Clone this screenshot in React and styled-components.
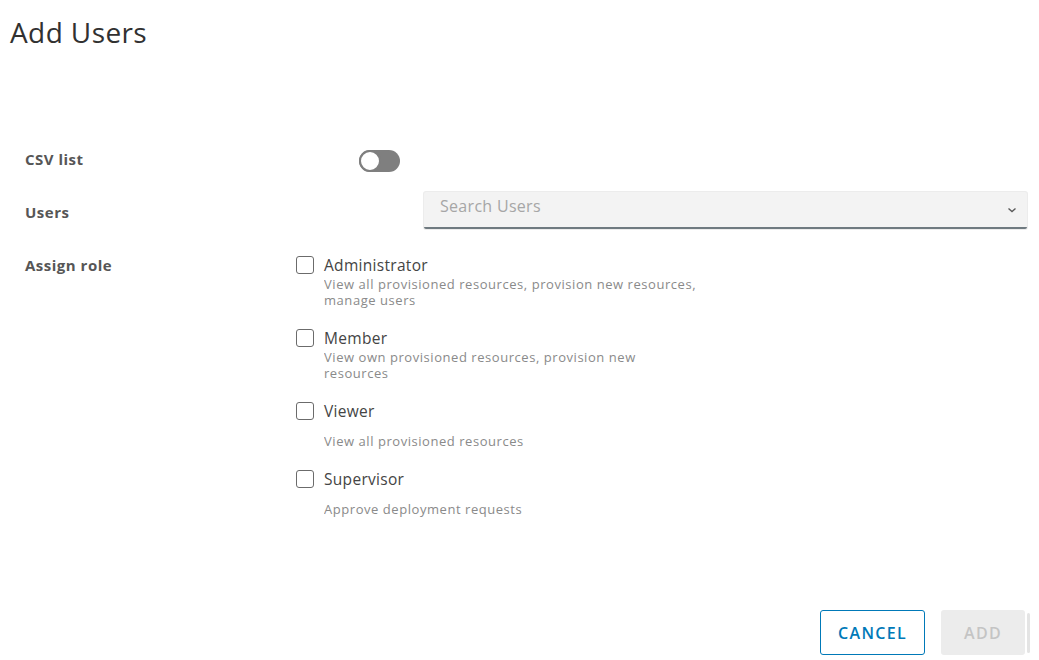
import React, { useState } from "react";
import styled, { createGlobalStyle } from "styled-components";

const GlobalStyle = createGlobalStyle`
  body {
    margin: 0;
    background: #fff;
    font-family: "Open Sans", "Liberation Sans", sans-serif;
  }
`;

const roles = [
  {
    name: "Administrator",
    desc: "View all provisioned resources, provision new resources, manage users",
  },
  { name: "Member", desc: "View own provisioned resources, provision new resources" },
  { name: "Viewer", desc: "View all provisioned resources", spaced: true },
  { name: "Supervisor", desc: "Approve deployment requests", spaced: true },
];

const App = () => {
  const [csv, setCsv] = useState(false);
  const [checked, setChecked] = useState({});

  return (
    <Page>
      <GlobalStyle />
      <Title>Add Users</Title>
      <Form>
        <Row $height={53}>
          <Label>CSV list</Label>
          <Toggle $on={csv} onClick={() => setCsv(!csv)} />
        </Row>

        <Row $height={53}>
          <Label>Users</Label>
          <Select>
            <Placeholder>Search Users</Placeholder>
            <svg width="10" height="10" viewBox="0 0 10 10">
              <path d="M1.5 3.5 L5 6.5 L8.5 3.5" fill="none" stroke="#5a5a5a" strokeWidth="1.4" />
            </svg>
          </Select>
        </Row>

        <Row>
          <Label>Assign role</Label>
          <Roles>
            {roles.map((r) => (
              <Role key={r.name}>
                <CheckRow
                  onClick={() => setChecked({ ...checked, [r.name]: !checked[r.name] })}
                >
                  <Box $on={checked[r.name]} />
                  <RoleName>{r.name}</RoleName>
                </CheckRow>
                <RoleDesc $spaced={r.spaced}>{r.desc}</RoleDesc>
              </Role>
            ))}
          </Roles>
        </Row>
      </Form>
      <Footer>
        <OutlineButton>CANCEL</OutlineButton>
        <SolidButton disabled>ADD</SolidButton>
        <ScrollEdge />
      </Footer>
    </Page>
  );
};

export default App;

const Page = styled.div`
  width: 1039px;
  height: 660px;
  box-sizing: border-box;
  padding: 13px 12px 0 10px;
  display: flex;
  flex-direction: column;
`;

const Title = styled.h1`
  margin: 0;
  font-size: 28px;
  font-weight: 400;
  letter-spacing: 0.4px;
  color: #313131;
  line-height: 38px;
`;

const Form = styled.div`
  margin-top: 98px;
  padding-left: 15px;
  display: flex;
  flex-direction: column;
`;

const Row = styled.div`
  display: flex;
  align-items: flex-start;
  height: ${(p) => (p.$height ? `${p.$height}px` : "auto")};
`;

const Label = styled.div`
  width: 271px;
  flex: none;
  margin-top: -1px;
  font-size: 15px;
  font-weight: 700;
  letter-spacing: 0.5px;
  color: #565656;
  line-height: 22px;
`;

const Toggle = styled.div`
  margin-left: 63px;
  margin-top: 1px;
  width: 41px;
  height: 22px;
  box-sizing: border-box;
  border-radius: 11px;
  background: ${(p) => (p.$on ? "#0079b8" : "#7f7f7f")};
  position: relative;
  cursor: pointer;
  &::after {
    content: "";
    position: absolute;
    top: 0;
    left: ${(p) => (p.$on ? "19px" : "0")};
    width: 22px;
    height: 22px;
    box-sizing: border-box;
    border-radius: 50%;
    background: #fff;
    border: 2px solid #7f7f7f;
  }
`;

const Select = styled.div`
  margin-left: 128px;
  margin-top: -10px;
  flex: 1;
  height: 37px;
  box-sizing: border-box;
  background: #f3f3f3;
  border-radius: 2px;
  border-bottom: 2px solid #6f7a80;
  box-shadow: 0 0 0 1px #ececec;
  display: flex;
  align-items: center;
  justify-content: space-between;
  padding: 0 10px 0 16px;
`;

const Placeholder = styled.span`
  font-size: 16px;
  letter-spacing: 0.3px;
  color: #a6a6a6;
  margin-top: -7px;
`;

const Roles = styled.div`
  display: flex;
  flex-direction: column;
  gap: 19px;
  margin-top: -1px;
`;

const Role = styled.div`
  display: flex;
  flex-direction: column;
`;

const CheckRow = styled.label`
  display: flex;
  align-items: center;
  gap: 10px;
  height: 22px;
  cursor: pointer;
`;

const Box = styled.span`
  width: 18px;
  height: 18px;
  box-sizing: border-box;
  border: 1.5px solid #6b6b6b;
  border-radius: 3px;
  background: ${(p) => (p.$on ? "#0079b8" : "#fff")};
`;

const RoleName = styled.span`
  font-size: 15.5px;
  letter-spacing: 0.3px;
  color: #444;
  line-height: 22px;
`;

const RoleDesc = styled.div`
  margin-left: 28px;
  width: 380px;
  overflow: hidden;
  font-size: 13px;
  letter-spacing: 0.55px;
  line-height: 16px;
  color: #8a8a8a;
  padding-top: ${(p) => (p.$spaced ? "11px" : "0")};
`;

const Footer = styled.div`
  margin-top: auto;
  margin-bottom: 5px;
  display: flex;
  justify-content: flex-end;
  align-items: center;
  gap: 16px;
`;

const OutlineButton = styled.button`
  width: 105px;
  height: 45px;
  background: #fff;
  border: 1.5px solid #0079b8;
  border-radius: 3px;
  color: #0079b8;
  font-family: inherit;
  font-size: 16px;
  font-weight: 600;
  letter-spacing: 1.3px;
  cursor: pointer;
`;

const SolidButton = styled.button`
  width: 84px;
  height: 45px;
  margin-right: -14px;
  background: #ececec;
  border: none;
  border-radius: 3px;
  color: #c4c4c4;
  font-family: inherit;
  font-size: 16px;
  font-weight: 600;
  letter-spacing: 1.3px;
`;

const ScrollEdge = styled.div`
  width: 3px;
  height: 40px;
  margin-right: -3px;
  background: #e4e4e4;
  border-radius: 2px;
`;
